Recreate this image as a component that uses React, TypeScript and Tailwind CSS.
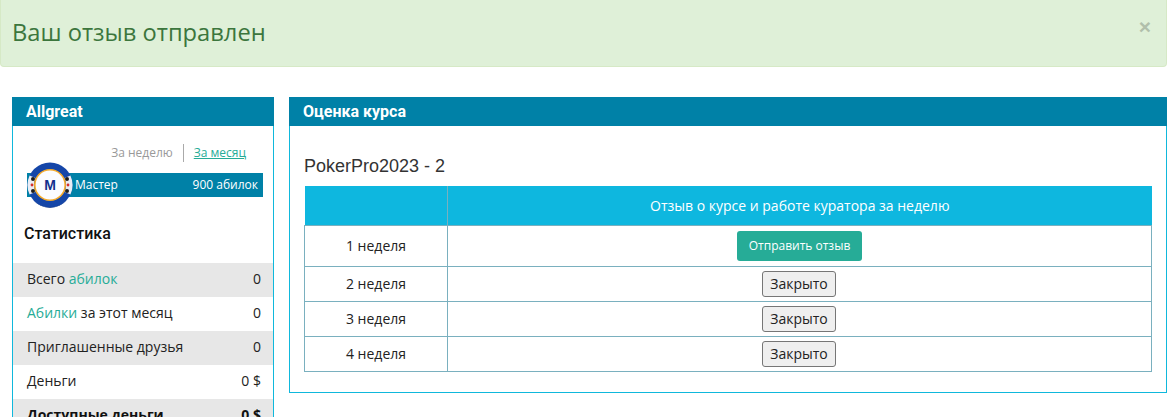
const openSans = "font-['Open_Sans','Liberation_Sans',sans-serif]";

function Chip() {
  return (
    <svg viewBox="0 0 46 46" className="absolute left-0 top-[-11px] w-[46px] h-[46px]">
      <circle cx="23" cy="23" r="22.5" fill="#1546a8" />
      <path d="M2.6 13.5 A22.5 22.5 0 0 0 2.6 32.5 L8.6 30 A16 16 0 0 1 8.6 16 Z" fill="#e9edf6" />
      <path d="M43.4 13.5 A22.5 22.5 0 0 1 43.4 32.5 L37.4 30 A16 16 0 0 0 37.4 16 Z" fill="#e9edf6" />
      <circle cx="6" cy="17" r="2" fill="#1c1c1c" />
      <circle cx="5" cy="23" r="1.4" fill="#d32f2f" />
      <circle cx="6" cy="29" r="2" fill="#1c1c1c" />
      <circle cx="40" cy="17" r="2" fill="#1c1c1c" />
      <circle cx="41" cy="23" r="1.4" fill="#d32f2f" />
      <circle cx="40" cy="29" r="2" fill="#1c1c1c" />
      <path d="M6 38 A22.5 22.5 0 0 0 40 38 A24 24 0 0 1 6 38 Z" fill="#0d3488" />
      <circle cx="23" cy="23" r="15.2" fill="#fbfcff" stroke="#f5ab2b" strokeWidth="1.6" />
      <text x="23" y="28" textAnchor="middle" fontSize="14" fontWeight="700" fontFamily="Liberation Sans, sans-serif" fill="#12308c">
        M
      </text>
    </svg>
  );
}

function Panel({ title, className, children }: { title: string; className: string; children: React.ReactNode }) {
  return (
    <div className={className}>
      <div className="h-[29px] bg-[#0081a7] pl-[14px] text-white font-bold text-[16px] leading-[29px] font-['Roboto',sans-serif]">
        {title}
      </div>
      <div className="border-x border-b border-[#0fb8dc]">{children}</div>
    </div>
  );
}

const stats = [
  { label: <>Всего <span className="text-[#26ac97]">абилок</span></>, value: "0", grey: true },
  { label: <><span className="text-[#26ac97]">Абилки</span> за этот месяц</>, value: "0", grey: false },
  { label: <>Приглашенные друзья</>, value: "0", grey: true },
  { label: <>Деньги</>, value: "0 $", grey: false },
  { label: <>Доступные деньги</>, value: "0 $", grey: true, bold: true },
];

const weeks = [
  { name: "2 неделя" },
  { name: "3 неделя" },
  { name: "4 неделя" },
];

export default function App() {
  return (
    <div className={`h-[417px] w-[1174px] overflow-hidden bg-white text-[#222] ${openSans}`}>
      <div className="flex h-[67px] w-[1167px] items-center justify-between rounded-b border border-t-0 border-[#d6e9c6] bg-[#dff0d8] pl-[11px] pr-[15px]">
        <span className="text-[23.7px] text-[#3c763d]">Ваш отзыв отправлен</span>
        <span className="mb-[14px] font-['Liberation_Sans',sans-serif] text-[21px] font-bold leading-none text-[#b1bfab]">×</span>
      </div>

      <div className="mt-[30px] flex w-[1167px] items-start gap-[15px] pl-[12px]">
        <Panel title="Allgreat" className="w-[262px] shrink-0">
          <div className="h-[400px]">
            <div className="flex h-[47px] items-start justify-end pr-[27px] pt-[18px] text-[12px]">
              <span className="pr-[10px] leading-[18px] text-[#999]">За неделю</span>
              <span className="h-[18px] w-px bg-[#aaa]" />
              <span className="pl-[10px] leading-[18px] text-[#26ac97] underline">За месяц</span>
            </div>
            <div className="relative ml-[14px] mr-[10px]">
              <div className="flex h-[24px] items-center justify-between bg-[#0081a7] pl-[48px] pr-[5px] text-[12px] text-white">
                <span>Мастер</span>
                <span>900 абилок</span>
              </div>
              <Chip />
            </div>
            <div className="ml-[11px] mt-[26px] font-['Roboto',sans-serif] text-[16px] font-medium leading-[22px] text-[#111]">Статистика</div>
            <div className="mt-[18px] text-[14px]">
              {stats.map((row, i) => (
                <div
                  key={i}
                  className={`flex h-[34px] items-center justify-between pb-[3px] pl-[14px] pr-[12px] ${row.grey ? "bg-[#e7e7e7]" : "bg-white"} ${row.bold ? "font-bold text-[#111]" : ""}`}
                >
                  <span>{row.label}</span>
                  <span>{row.value}</span>
                </div>
              ))}
            </div>
          </div>
        </Panel>

        <Panel title="Оценка курса" className="w-[878px] shrink-0">
          <div className="px-[14px] pb-[20px]">
            <div className="pt-[29px] pb-[8px] font-['Liberation_Sans',sans-serif] text-[18px] leading-[23px] text-[#333]">PokerPro2023 - 2</div>
            <table className="w-[848px] table-fixed border-collapse text-[14px]">
              <colgroup>
                <col className="w-[143px]" />
                <col />
              </colgroup>
              <thead>
                <tr className="h-[39px] bg-[#0eb7df] text-white">
                  <th className="border border-[#7ab0bf] border-t-0 border-l-0 font-normal" />
                  <th className="border-b border-[#7ab0bf] text-center text-[14px] font-normal">Отзыв о курсе и работе куратора за неделю</th>
                </tr>
              </thead>
              <tbody>
                <tr className="h-[41px]">
                  <td className="border border-[#7ab0bf] text-center">1 неделя</td>
                  <td className="border border-[#7ab0bf] text-center">
                    <button className="h-[30px] w-[125px] rounded-[3px] bg-[#26ac97] text-[12px] text-white">Отправить отзыв</button>
                  </td>
                </tr>
                {weeks.map((w) => (
                  <tr key={w.name} className="h-[35px]">
                    <td className="border border-[#7ab0bf] text-center">{w.name}</td>
                    <td className="border border-[#7ab0bf] text-center">
                      <button className="mr-[1px] h-[26px] w-[74px] rounded-[3px] border border-[#767676] bg-[#efefef] align-middle text-[14px] text-[#222]">Закрыто</button>
                    </td>
                  </tr>
                ))}
              </tbody>
            </table>
          </div>
        </Panel>
      </div>
    </div>
  );
}
